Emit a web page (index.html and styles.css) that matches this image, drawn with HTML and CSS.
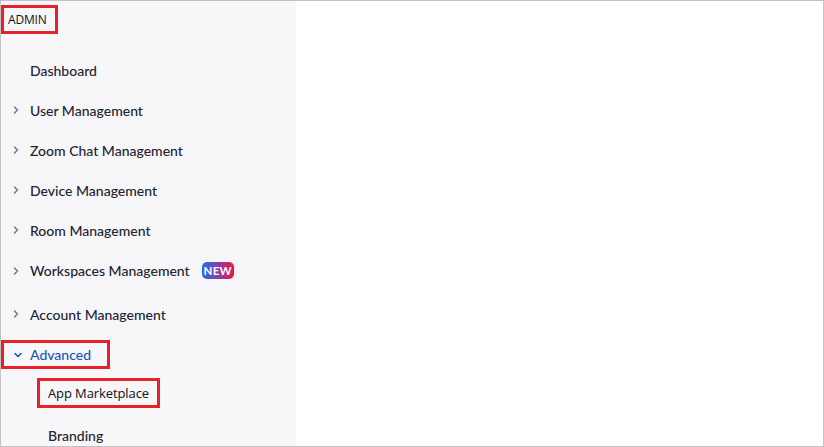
FILE: index.html
```html
<!DOCTYPE html>
<html>
<head>
<meta charset="utf-8">
<link rel="stylesheet" href="styles.css">
</head>
<body>
<div class="frame">
  <nav class="sidebar">
    <div class="header"><span class="admin">ADMIN</span></div>
    <ul class="menu">
      <li class="item"><span class="chev"></span><span class="label">Dashboard</span></li>
      <li class="item"><span class="chev"><svg width="6" height="10" viewBox="0 0 6 10"><path d="M1.5 2 L4.5 5 L1.5 8" /></svg></span><span class="label">User Management</span></li>
      <li class="item"><span class="chev"><svg width="6" height="10" viewBox="0 0 6 10"><path d="M1.5 2 L4.5 5 L1.5 8" /></svg></span><span class="label">Zoom Chat Management</span></li>
      <li class="item"><span class="chev"><svg width="6" height="10" viewBox="0 0 6 10"><path d="M1.5 2 L4.5 5 L1.5 8" /></svg></span><span class="label">Device Management</span></li>
      <li class="item"><span class="chev"><svg width="6" height="10" viewBox="0 0 6 10"><path d="M1.5 2 L4.5 5 L1.5 8" /></svg></span><span class="label">Room Management</span></li>
      <li class="item tall"><span class="chev"><svg width="6" height="10" viewBox="0 0 6 10"><path d="M1.5 2 L4.5 5 L1.5 8" /></svg></span><span class="label">Workspaces Management</span><span class="badge">NEW</span></li>
      <li class="item"><span class="chev"><svg width="6" height="10" viewBox="0 0 6 10"><path d="M1.5 2 L4.5 5 L1.5 8" /></svg></span><span class="label">Account Management</span></li>
      <li class="item open"><span class="hl hl-adv"><span class="chev down"><svg width="10" height="6" viewBox="0 0 10 6"><path d="M2 1.5 L5 4.5 L8 1.5" /></svg></span><span class="label">Advanced</span></span></li>
      <li class="item sub boxed"><span class="hl hl-app"><span class="label app">App Marketplace</span></span></li>
      <li class="item sub last"><span class="label">Branding</span></li>
    </ul>
  </nav>
  <main class="main"></main>
</div>
</body>
</html>
```

FILE: styles.css
```css
html, body {
  margin: 0;
  padding: 0;
  background: #ffffff;
}
.frame {
  width: 824px;
  height: 447px;
  box-sizing: border-box;
  border: 1px solid #c3c3c3;
  display: flex;
  overflow: hidden;
}
.sidebar {
  width: 295px;
  flex: none;
  background: #f7f7fa;
  font-family: Lato, "Liberation Sans", sans-serif;
  font-weight: 500;
  color: #232333;
}
.main {
  flex: 1;
  background: #ffffff;
}
.header {
  height: 49px;
  box-sizing: border-box;
  padding-top: 4px;
}
.admin {
  display: flex;
  align-items: center;
  box-sizing: border-box;
  width: 57px;
  height: 29px;
  border: 3px solid #e8202a;
  padding-left: 4px;
  font-family: "Open Sans", "Liberation Sans", sans-serif;
  font-weight: 400;
  font-size: 12px;
  color: #111111;
  letter-spacing: -0.2px;
}
.menu {
  list-style: none;
  margin: 0;
  padding: 0;
}
.item {
  height: 40px;
  display: flex;
  align-items: center;
  padding-left: 12px;
  font-size: 14px;
}
.item.tall {
  height: 44px;
  padding-bottom: 3px;
  box-sizing: border-box;
}
.chev {
  width: 17px;
  flex: none;
  display: flex;
  align-items: center;
}
.chev svg path {
  fill: none;
  stroke: #6e6e7a;
  stroke-width: 1.4;
  stroke-linecap: round;
  stroke-linejoin: round;
}
.chev.down svg path {
  stroke: #1757bd;
  stroke-width: 1.6;
}
.label {
  white-space: nowrap;
}
.badge {
  margin-left: 12px;
  height: 17px;
  width: 32px;
  box-sizing: border-box;
  border-radius: 5px;
  background: linear-gradient(90deg, #1b6df2 0%, #8a3fa6 50%, #ee1442 100%);
  color: #ffffff;
  font-size: 11.5px;
  font-weight: 700;
  display: flex;
  align-items: center;
  justify-content: center;
  letter-spacing: 0.2px;
}
.item.open {
  padding-left: 0;
}
.hl {
  display: flex;
  align-items: center;
  box-sizing: border-box;
  border: 3px solid #e8202a;
}
.hl-adv {
  width: 109px;
  height: 29px;
  padding-left: 9px;
  margin-top: 1px;
  color: #1757bd;
}
.item.sub {
  padding-left: 47px;
}
.item.sub.boxed {
  padding-left: 36px;
}
.item.sub.last {
  padding-top: 1px;
}
.hl-app {
  width: 123px;
  height: 30px;
  padding-left: 8px;
  margin-top: -2px;
}
.app {
  font-family: "Open Sans", "Liberation Sans", sans-serif;
  font-weight: 400;
  font-size: 13px;
  color: #111111;
  letter-spacing: -0.1px;
}
```
